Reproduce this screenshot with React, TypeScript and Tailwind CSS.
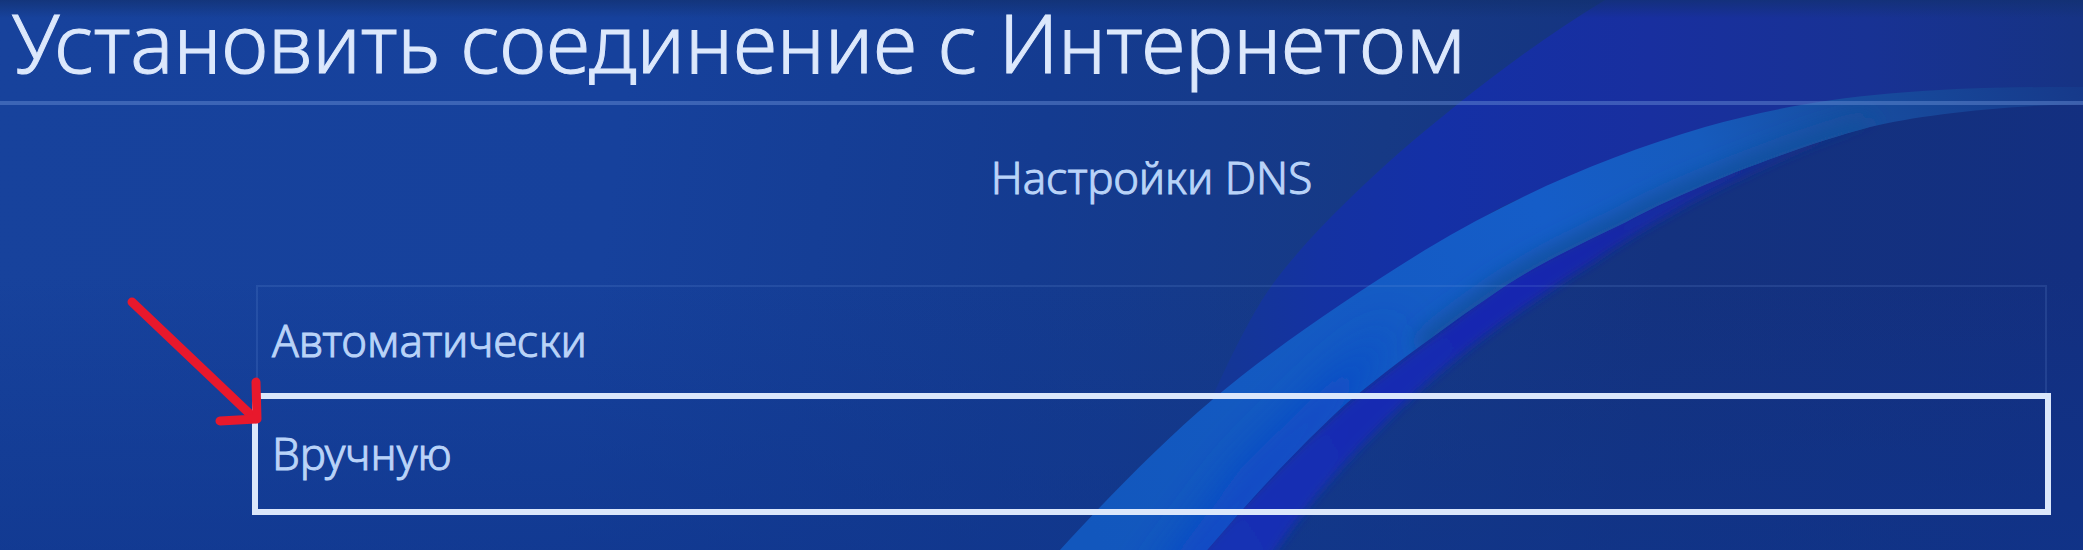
import React, { useState } from 'react';

const options = ['Автоматически', 'Вручную'];

const Backdrop: React.FC = () => (
  <svg
    className="absolute inset-0 h-full w-full"
    viewBox="0 0 2083 550"
    preserveAspectRatio="none"
    aria-hidden="true"
  >
    <defs>
      <linearGradient id="base" gradientUnits="userSpaceOnUse" x1="0" y1="0" x2="2083" y2="300">
        <stop offset="0" stopColor="#17429c" />
        <stop offset="0.3" stopColor="#16419c" />
        <stop offset="0.5" stopColor="#143b90" />
        <stop offset="0.66" stopColor="#163985" />
        <stop offset="0.8" stopColor="#14327f" />
        <stop offset="1" stopColor="#132f80" />
      </linearGradient>
      <linearGradient id="floor" x1="0" y1="0" x2="0" y2="1">
        <stop offset="0.5" stopColor="#0f358c" stopOpacity="0" />
        <stop offset="1" stopColor="#0f358c" stopOpacity="0.6" />
      </linearGradient>
      <linearGradient id="veil" gradientUnits="userSpaceOnUse" x1="1215" y1="0" x2="2083" y2="0">
        <stop offset="0" stopColor="#143795" />
        <stop offset="0.12" stopColor="#1432a2" />
        <stop offset="0.25" stopColor="#1430a6" />
        <stop offset="0.5" stopColor="#182f9f" />
        <stop offset="0.75" stopColor="#183294" />
        <stop offset="1" stopColor="#163384" />
      </linearGradient>
      <linearGradient id="ribbon" gradientUnits="userSpaceOnUse" x1="1100" y1="550" x2="2083" y2="90">
        <stop offset="0" stopColor="#1257bd" />
        <stop offset="0.5" stopColor="#155dc8" />
        <stop offset="0.66" stopColor="#165bbd" />
        <stop offset="0.8" stopColor="#174da0" />
        <stop offset="1" stopColor="#16398a" />
      </linearGradient>
      <linearGradient id="edge" gradientUnits="userSpaceOnUse" x1="1240" y1="550" x2="1880" y2="125">
        <stop offset="0" stopColor="#1530b4" />
        <stop offset="0.5" stopColor="#1426b0" />
        <stop offset="0.8" stopColor="#142b9c" />
        <stop offset="1" stopColor="#153184" />
      </linearGradient>
      <linearGradient id="top" x1="0" y1="0" x2="0" y2="1">
        <stop offset="0" stopColor="#12306e" stopOpacity="0.7" />
        <stop offset="1" stopColor="#12306e" stopOpacity="0" />
      </linearGradient>
      <filter id="soft">
        <feGaussianBlur stdDeviation="5" />
      </filter>
      <filter id="shade" x="-20%" y="-20%" width="140%" height="140%">
        <feGaussianBlur stdDeviation="10" />
      </filter>
      <filter id="glow" x="-30%" y="-30%" width="160%" height="160%">
        <feGaussianBlur stdDeviation="20" />
      </filter>
      <clipPath id="ribbonClip">
        <path d="M1060 550C1099 507 1160 444 1212 400C1275 347 1345 300 1425 250C1520 193 1610 155 1705 127C1800 100 1900 86 2083 87V104C2000 106 1920 115 1870 127C1790 148 1680 192 1626 222C1580 244 1540 263 1505 286C1450 323 1400 360 1348 402C1300 445 1250 500 1207 550Z" />
      </clipPath>
    </defs>
    <rect width="2083" height="550" fill="url(#base)" />
    <rect width="2083" height="550" fill="url(#floor)" />
    <path
      d="M1605 0C1530 45 1455 105 1400 152C1350 196 1290 255 1262 300C1245 328 1230 358 1210 402C1345 300 1425 250 1500 208C1610 155 1705 127 1805 105C1900 90 1980 87 2083 87V0Z"
      fill="url(#veil)"
    />
    <path
      d="M1195 560C1245 500 1300 445 1348 402C1400 360 1450 325 1505 280C1540 260 1580 240 1626 216C1680 188 1790 145 1880 122C1820 142 1780 158 1740 178C1700 196 1640 230 1592 263C1520 308 1460 352 1406 402C1365 440 1310 497 1266 565Z"
      fill="url(#edge)"
      filter="url(#soft)"
    />
    <g clipPath="url(#ribbonClip)">
      <rect x="1040" y="70" width="1043" height="480" fill="url(#ribbon)" />
      <path
        d="M1150 590L1240 470L1330 380L1400 320L1348 402L1260 500L1200 590Z"
        fill="#1144c8"
        filter="url(#glow)"
      />
      <path
        d="M1421 348C1450 325 1475 306 1505 286C1540 263 1580 244 1626 222C1680 192 1790 148 1870 127"
        fill="none"
        stroke="#174f9c"
        strokeWidth="22"
        filter="url(#shade)"
      />
    </g>
    <rect width="2083" height="18" fill="url(#top)" />
  </svg>
);

const Pointer: React.FC = () => (
  <svg
    className="pointer-events-none absolute -top-28 -left-32 h-40 w-40"
    viewBox="0 0 160 160"
    fill="none"
    stroke="#e8182c"
    strokeWidth="9"
    strokeLinecap="round"
    strokeLinejoin="round"
    aria-hidden="true"
  >
    <path d="M8 21L128 135" />
    <path d="M132 101L133 138L96 140" />
  </svg>
);

const App: React.FC = () => {
  const [selected, setSelected] = useState('Вручную');

  return (
    <main className="relative min-h-screen overflow-hidden bg-[#143b90] font-['Noto_Sans',sans-serif] font-light text-[#b9d3f8] [-webkit-text-stroke:1px]">
      <Backdrop />

      <div className="relative">
        <header className="border-b-4 border-[#6a90d8]/45 px-3 pb-[17px]">
          <h1 className="text-[81px] leading-[84px] whitespace-nowrap text-[#dce8fc]">
            Установить соединение с Интернетом
          </h1>
        </header>

        <section className="pt-[42px] pr-8 pl-63">
          <h2 className="text-center text-[44px] leading-[60px]">Настройки DNS</h2>

          <div className="mt-[78px] flex flex-col">
            {options.map((option) => (
              <div key={option} className="relative flex flex-col">
                <button
                  type="button"
                  onClick={() => setSelected(option)}
                  className={`text-left text-[44px] leading-[60px] ${
                    selected === option
                      ? 'border-6 border-[#dbe7fb] px-[14px] pt-6 pb-[26px]'
                      : 'mx-1 border-2 border-b-0 border-[#7fa5e8]/15 px-[14px] pt-[23px] pb-[23px]'
                  }`}
                >
                  {option}
                </button>
                {option === 'Вручную' && <Pointer />}
              </div>
            ))}
          </div>
        </section>
      </div>
    </main>
  );
};

export default App;
